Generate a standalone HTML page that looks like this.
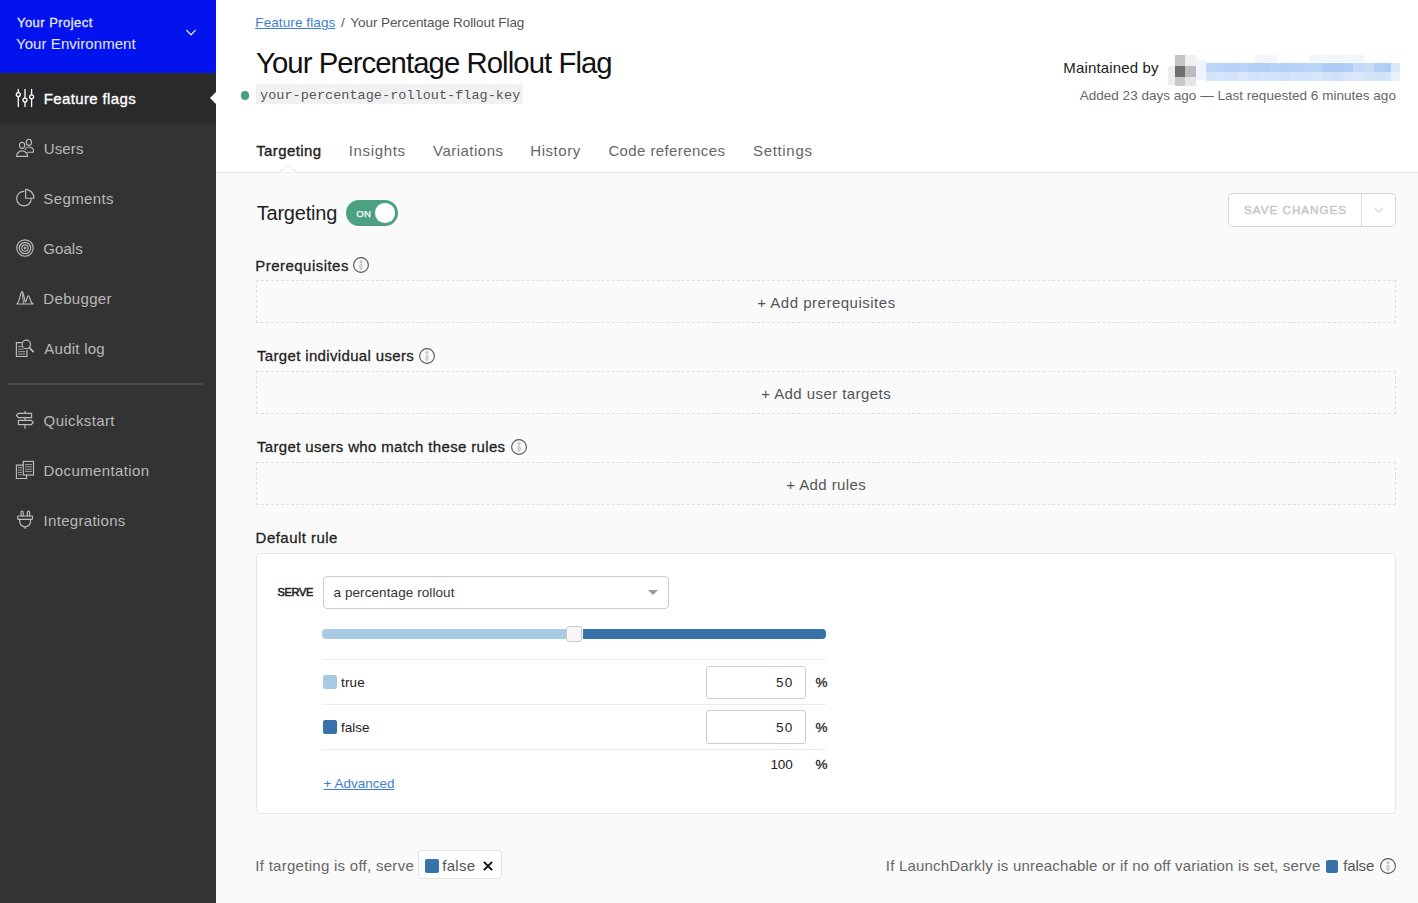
<!DOCTYPE html>
<html><head><meta charset="utf-8">
<style>

*{box-sizing:border-box;margin:0;padding:0}
html,body{width:1418px;height:903px;overflow:hidden;background:#fafafa;font-family:"Liberation Sans",sans-serif;color:#222;position:relative}
.b{position:absolute}
.dash{position:absolute;left:256px;width:1140px;height:43px;border:1px dashed #e0e0e0}
.info{position:absolute;width:16px;height:16px}

.t{position:absolute;white-space:nowrap;line-height:1}
</style></head>
<body>

<div class="b" style="left:0;top:0;width:216px;height:903px;background:#333"></div>
<div class="b" style="left:0;top:0;width:216px;height:73px;background:#0313ee"></div>
<div class="b" style="left:0;top:73px;width:216px;height:49.5px;background:#2a2a2a"></div>
<div class="b" style="left:0;top:122px;width:216px;height:2px;background:#2f2f2f"></div>
<div class="b" style="left:8px;top:383px;width:196px;height:2px;background:#474747"></div>

<svg class="b" style="left:0;top:0" width="216" height="540" viewBox="0 0 216 540" fill="none" stroke-linecap="round">
 <g stroke="#fff" stroke-width="1.3">
  <path d="M18.3 89.5V92.6M18.3 96.6V106.5M25 89.5V98.1M25 102.1V106.5M31.6 89.5V94.8M31.6 98.8V106.5"/>
  <circle cx="18.3" cy="94.6" r="2"/><circle cx="25" cy="100.1" r="2"/><circle cx="31.6" cy="96.8" r="2"/>
 </g>
 <g stroke="#bdbdbd" stroke-width="1.15">
  <ellipse cx="22.1" cy="145.3" rx="2.6" ry="3.1"/>
  <ellipse cx="28.9" cy="142.3" rx="2.6" ry="3.1"/>
  <path d="M16.6 156.3 A5.5 5.4 0 0 1 27.6 156.3 Z"/>
  <path d="M25.2 149.6 A4.3 3.8 0 0 1 33.3 152.2 H27.4"/>
  <path d="M24 191.3 A7.3 7.3 0 1 0 31.3 198.6"/>
  <path d="M25.6 189.4 V198.2 H33.9 A8.4 8.8 0 0 0 25.6 189.4 Z"/>
  <circle cx="25" cy="248" r="8.2"/><circle cx="25" cy="248" r="5.7"/><circle cx="25" cy="248" r="3.2"/><circle cx="25" cy="248" r="0.8"/>
  <path d="M16.4 304 C19.8 304 20.2 291.4 22 291.4 C23.8 291.4 24.4 302.2 25.4 302.2 C26.4 302.2 27 295.7 28.4 295.7 C29.8 295.7 30.2 304 33.6 304 Z"/><path d="M22.2 293 C22.6 296 22.8 300 23.6 303.6" stroke-width="0.9"/>
  <path d="M21.2 342.6 H16.4 V356.5 H27 V350.3"/>
  <path d="M18.4 346.6 H21.5 M18.4 349.2 H23 M18.4 351.7 H25 M18.4 354.1 H25" stroke-width="0.8"/>
  <circle cx="26.3" cy="344.4" r="4.2"/>
  <path d="M29.3 347.6 L33.2 351.6" stroke-width="1.8"/>
  <path d="M25 411.2 V413.2 M25 417.7 V420.2 M25 424.7 V428.3"/>
  <path d="M31.6 413.3 H18.4 L16.4 415.45 L18.4 417.6 H31.6 Z"/>
  <path d="M18.4 420.3 H31.3 L33.3 422.45 L31.3 424.6 H18.4 Z"/>
  <path d="M23.3 465.1 H16.4 V478.5 H26.6 V475.1"/>
  <rect x="23.3" y="461.4" width="10.2" height="13.6"/>
  <path d="M25.3 464.6 H31.5 M25.3 466.8 H31.5 M25.3 469.2 H31.5 M25.3 471.4 H31.5 M18.3 467.6 H21.5 M18.3 470 H21.5 M18.3 472.4 H21.5 M18.3 474.8 H21.5" stroke-width="0.8"/>
  <path d="M21 516 V512.3 A1 1 0 0 1 23.2 512.3 V516 M27.4 516 V512.3 A1 1 0 0 1 29.6 512.3 V516"/>
  <rect x="17.7" y="516" width="14.8" height="3.3" rx="0.5"/>
  <path d="M19.7 519.3 V521.5 A5.4 5.3 0 0 0 30.5 521.5 V519.3 M25.1 526.8 V528.5"/>
 </g>
 <path d="M186.7 30.4 L191 34.8 L195.3 30.4" stroke="#fff" stroke-width="1.2" stroke-linecap="round" stroke-linejoin="round"/>
</svg>

<div class="b" style="left:216px;top:0;width:1202px;height:173px;background:#fff;border-bottom:1px solid #e3e3e3"></div>
<div class="b" style="left:209.8px;top:91.6px;width:0;height:0;border-top:6.2px solid transparent;border-bottom:6.2px solid transparent;border-right:6.2px solid #fff"></div>
<svg class="b" style="left:270px;top:160px" width="36" height="16" viewBox="270 160 36 16"><path d="M279.5 172.5 L288 164.5 L296.5 172.5 Z" fill="#fff"/><path d="M279.5 172.5 L288 164.5 L296.5 172.5" fill="none" stroke="#e3e3e3" stroke-width="1"/></svg>
<div class="b" style="left:240.5px;top:91.2px;width:8.6px;height:8.6px;border-radius:50%;background:#4d9e80"></div>
<div class="b" style="left:256px;top:84px;width:267px;height:20px;background:#f1f1f1"></div>
<div class="b" style="left:1166px;top:50px;width:240px;height:40px;filter:blur(0.6px)">
  <div class="b" style="left:2px;top:16px;width:7px;height:19px;background:#ededed"></div>
  <div class="b" style="left:8.7px;top:5.3px;width:10.3px;height:10.7px;background:#c4c4c4"></div>
  <div class="b" style="left:8.7px;top:16px;width:10.3px;height:10.7px;background:#6e6e6e"></div>
  <div class="b" style="left:8.7px;top:26.7px;width:10.3px;height:8.9px;background:#c8c8c8"></div>
  <div class="b" style="left:19px;top:5.3px;width:11px;height:10.7px;background:#f0f0f0"></div>
  <div class="b" style="left:19px;top:16px;width:11px;height:10.7px;background:#bdbdbd"></div>
  <div class="b" style="left:19px;top:26.7px;width:11px;height:8.9px;background:#e6e6e6"></div>
  <div class="b" style="left:30px;top:10px;width:10px;height:20px;background:#eef4fc"></div>
  <div class="b" style="left:89px;top:5px;width:22px;height:8px;background:#f3f7fd"></div>
  <div class="b" style="left:143px;top:5px;width:55px;height:7px;background:#f1f5fc"></div>
  <div class="b" style="left:39.8px;top:13.3px;width:185.2px;height:8.5px;background:linear-gradient(90deg,#bcd6f8 0.0px 10.5px,#b9d4f7 10.5px 21.0px,#b6d2f7 21.0px 31.5px,#b9d4f7 31.5px 42.0px,#b4d0f6 42.0px 52.5px,#b2cff6 52.5px 63.0px,#b7d3f7 63.0px 73.5px,#b3d0f6 73.5px 84.0px,#b6d2f7 84.0px 94.5px,#b8d4f7 94.5px 105.0px,#b9d4f7 105.0px 115.5px,#aecdf6 115.5px 126.0px,#adccf5 126.0px 136.5px,#b1cff6 136.5px 147.0px,#c3dbf8 147.0px 157.5px,#c8def8 157.5px 168.0px,#b2cff6 168.0px 178.5px,#aecdf6 178.5px 189.0px)"></div>
  <div class="b" style="left:39.8px;top:21.8px;width:185.2px;height:9.3px;background:linear-gradient(90deg,#d3e3f9 0.0px 10.5px,#d6e5f9 10.5px 21.0px,#d3e3f9 21.0px 31.5px,#dae7fa 31.5px 42.0px,#d1e2f9 42.0px 52.5px,#d6e5f9 52.5px 63.0px,#d3e3f9 63.0px 73.5px,#cfe0f8 73.5px 84.0px,#d6e5f9 84.0px 94.5px,#d3e3f9 94.5px 105.0px,#d8e6fa 105.0px 115.5px,#d3e3f9 115.5px 126.0px,#cfe0f8 126.0px 136.5px,#d6e5f9 136.5px 147.0px,#dbe8fa 147.0px 157.5px,#d3e3f9 157.5px 168.0px,#d1e2f9 168.0px 178.5px,#d5e4f9 178.5px 189.0px)"></div>
  <div class="b" style="left:225px;top:13.3px;width:9px;height:8.5px;background:#dce9fb"></div>
  <div class="b" style="left:225px;top:21.8px;width:9px;height:9.3px;background:#e8f0fc"></div>
</div>
<div class="b" style="left:346.2px;top:200px;width:51.6px;height:25.8px;border-radius:13px;background:#4ca181"></div>
<div class="b" style="left:375.3px;top:203.2px;width:19.4px;height:19.4px;border-radius:50%;background:#fff"></div>
<div class="b" style="left:1228px;top:193px;width:168px;height:34px;border:1px solid #d6d6d6;border-radius:4px;background:#fff"></div>
<div class="b" style="left:1361px;top:194px;width:1px;height:32px;background:#d9d9d9"></div>
<svg class="b" style="left:1372px;top:205px" width="14" height="10" viewBox="0 0 14 10"><path d="M2.3 3 L6.5 7 L10.7 3" fill="none" stroke="#bdbdbd" stroke-width="1"/></svg>
<svg class="info" style="left:353.1px;top:256.9px" width="16" height="16" viewBox="0 0 16 16"><circle cx="8" cy="8" r="7.4" fill="none" stroke="#555" stroke-width="1.1"/><ellipse cx="8" cy="4.6" rx="1.2" ry="0.9" fill="none" stroke="#aaa" stroke-width="0.9"/><rect x="7" y="7.2" width="2" height="5.2" rx="1" fill="none" stroke="#aaa" stroke-width="0.9"/></svg>
<svg class="info" style="left:418.8px;top:347.7px" width="16" height="16" viewBox="0 0 16 16"><circle cx="8" cy="8" r="7.4" fill="none" stroke="#555" stroke-width="1.1"/><ellipse cx="8" cy="4.6" rx="1.2" ry="0.9" fill="none" stroke="#aaa" stroke-width="0.9"/><rect x="7" y="7.2" width="2" height="5.2" rx="1" fill="none" stroke="#aaa" stroke-width="0.9"/></svg>
<svg class="info" style="left:511px;top:438.8px" width="16" height="16" viewBox="0 0 16 16"><circle cx="8" cy="8" r="7.4" fill="none" stroke="#555" stroke-width="1.1"/><ellipse cx="8" cy="4.6" rx="1.2" ry="0.9" fill="none" stroke="#aaa" stroke-width="0.9"/><rect x="7" y="7.2" width="2" height="5.2" rx="1" fill="none" stroke="#aaa" stroke-width="0.9"/></svg>
<svg class="info" style="left:1380.2px;top:857.8px" width="16" height="16" viewBox="0 0 16 16"><circle cx="8" cy="8" r="7.4" fill="none" stroke="#555" stroke-width="1.1"/><ellipse cx="8" cy="4.6" rx="1.2" ry="0.9" fill="none" stroke="#aaa" stroke-width="0.9"/><rect x="7" y="7.2" width="2" height="5.2" rx="1" fill="none" stroke="#aaa" stroke-width="0.9"/></svg>
<div class="dash" style="top:280px"></div>
<div class="dash" style="top:371px"></div>
<div class="dash" style="top:462px"></div>
<div class="b" style="left:256px;top:553px;width:1140px;height:261px;background:#fff;border:1px solid #e6e6e6;border-radius:4px"></div>
<div class="b" style="left:322.5px;top:575.5px;width:346.5px;height:33px;background:#fff;border:1px solid #cdcdcd;border-radius:4px"></div>
<svg class="b" style="left:644px;top:586px" width="18" height="12" viewBox="0 0 18 12"><path d="M4 4 H14 L9 9 Z" fill="#9a9a9a"/></svg>
<div class="b" style="left:322px;top:629px;width:245px;height:10px;border-radius:4px 0 0 4px;background:#a8cae2"></div>
<div class="b" style="left:583px;top:629px;width:243px;height:10px;border-radius:0 4px 4px 0;background:#3773aa"></div>
<div class="b" style="left:566.2px;top:626.1px;width:15.6px;height:15.6px;border-radius:3px;background:#f7f7f7;border:1px solid #c9c9c9"></div>
<div class="b" style="left:322px;top:659px;width:504px;height:1px;background:#ececec"></div>
<div class="b" style="left:322px;top:704px;width:504px;height:1px;background:#ececec"></div>
<div class="b" style="left:322px;top:749px;width:504px;height:1px;background:#ececec"></div>
<div class="b" style="left:323.2px;top:675.2px;width:13.8px;height:13.5px;border-radius:2px;background:#a8cae2"></div>
<div class="b" style="left:323.2px;top:720.2px;width:13.8px;height:13.6px;border-radius:2px;background:#3773aa"></div>
<div class="b" style="left:706.4px;top:665.5px;width:99.4px;height:33.1px;background:#fff;border:1px solid #cdcdcd;border-radius:3px"></div>
<div class="b" style="left:706.4px;top:710.2px;width:99.4px;height:33.4px;background:#fff;border:1px solid #cdcdcd;border-radius:3px"></div>
<div class="b" style="left:418.4px;top:850.4px;width:83.3px;height:29px;background:#fff;border:1px solid #e3e3e3;border-radius:3px"></div>
<div class="b" style="left:424.9px;top:859.2px;width:14px;height:13.7px;border-radius:2px;background:#3773aa"></div>
<svg class="b" style="left:480px;top:858px" width="16" height="16" viewBox="0 0 16 16"><path d="M3.9 3.9 L12.1 12.1 M12.1 3.9 L3.9 12.1" stroke="#111" stroke-width="2"/></svg>
<div class="b" style="left:1325.6px;top:860px;width:12.6px;height:12.5px;border-radius:2px;background:#3773aa"></div>

<div class="t" style="left:17.00px;top:16.00px;font-size:13px;font-weight:normal;color:#e6eaff;letter-spacing:0.455px;font-family:'Liberation Sans', sans-serif;-webkit-text-stroke:0.3px currentColor;">Your Project</div>
<div class="t" style="left:16.00px;top:36.00px;font-size:15px;font-weight:normal;color:#e6eaff;letter-spacing:0.067px;font-family:'Liberation Sans', sans-serif;">Your Environment</div>
<div class="t" style="left:43.70px;top:91.00px;font-size:15px;font-weight:normal;color:#fff;letter-spacing:0.375px;font-family:'Liberation Sans', sans-serif;-webkit-text-stroke:0.35px currentColor;">Feature flags</div>
<div class="t" style="left:43.70px;top:141.00px;font-size:15px;font-weight:normal;color:#b9b9b9;letter-spacing:0.150px;font-family:'Liberation Sans', sans-serif;">Users</div>
<div class="t" style="left:43.30px;top:191.00px;font-size:15px;font-weight:normal;color:#b9b9b9;letter-spacing:0.386px;font-family:'Liberation Sans', sans-serif;">Segments</div>
<div class="t" style="left:43.30px;top:240.70px;font-size:15px;font-weight:normal;color:#b9b9b9;letter-spacing:0.075px;font-family:'Liberation Sans', sans-serif;">Goals</div>
<div class="t" style="left:43.30px;top:290.60px;font-size:15px;font-weight:normal;color:#b9b9b9;letter-spacing:0.329px;font-family:'Liberation Sans', sans-serif;">Debugger</div>
<div class="t" style="left:44.30px;top:340.70px;font-size:15px;font-weight:normal;color:#b9b9b9;letter-spacing:0.250px;font-family:'Liberation Sans', sans-serif;">Audit log</div>
<div class="t" style="left:43.60px;top:412.90px;font-size:15px;font-weight:normal;color:#b9b9b9;letter-spacing:0.367px;font-family:'Liberation Sans', sans-serif;">Quickstart</div>
<div class="t" style="left:43.60px;top:462.80px;font-size:15px;font-weight:normal;color:#b9b9b9;letter-spacing:0.383px;font-family:'Liberation Sans', sans-serif;">Documentation</div>
<div class="t" style="left:43.60px;top:512.90px;font-size:15px;font-weight:normal;color:#b9b9b9;letter-spacing:0.300px;font-family:'Liberation Sans', sans-serif;">Integrations</div>
<div class="t" style="left:255.30px;top:16.40px;font-size:13.5px;font-weight:normal;color:#3f7dd3;letter-spacing:0.100px;font-family:'Liberation Sans', sans-serif;text-decoration:underline;">Feature flags</div>
<div class="t" style="left:341.00px;top:16.40px;font-size:13.5px;font-weight:normal;color:#555;letter-spacing:0.000px;font-family:'Liberation Sans', sans-serif;">/</div>
<div class="t" style="left:350.30px;top:16.40px;font-size:13.5px;font-weight:normal;color:#555;letter-spacing:-0.067px;font-family:'Liberation Sans', sans-serif;">Your Percentage Rollout Flag</div>
<div class="t" style="left:256.00px;top:47.80px;font-size:29.3px;font-weight:normal;color:#111;letter-spacing:-0.926px;font-family:'Liberation Sans', sans-serif;">Your Percentage Rollout Flag</div>
<div class="t" style="left:260.00px;top:88.50px;font-size:13.5px;font-weight:normal;color:#555;letter-spacing:0.032px;font-family:'Liberation Mono', monospace;">your-percentage-rollout-flag-key</div>
<div class="t" style="left:1063.30px;top:60.10px;font-size:15px;font-weight:normal;color:#222;letter-spacing:0.158px;font-family:'Liberation Sans', sans-serif;">Maintained by</div>
<div class="t" style="left:1079.70px;top:89.20px;font-size:13.5px;font-weight:normal;color:#666;letter-spacing:0.021px;font-family:'Liberation Sans', sans-serif;">Added 23 days ago &mdash; Last requested 6 minutes ago</div>
<div class="t" style="left:256.20px;top:142.80px;font-size:15px;font-weight:normal;color:#222;letter-spacing:0.400px;font-family:'Liberation Sans', sans-serif;-webkit-text-stroke:0.35px currentColor;">Targeting</div>
<div class="t" style="left:348.70px;top:142.80px;font-size:15px;font-weight:normal;color:#666;letter-spacing:0.657px;font-family:'Liberation Sans', sans-serif;">Insights</div>
<div class="t" style="left:433.00px;top:142.80px;font-size:15px;font-weight:normal;color:#666;letter-spacing:0.489px;font-family:'Liberation Sans', sans-serif;">Variations</div>
<div class="t" style="left:530.30px;top:142.80px;font-size:15px;font-weight:normal;color:#666;letter-spacing:0.533px;font-family:'Liberation Sans', sans-serif;">History</div>
<div class="t" style="left:608.40px;top:142.80px;font-size:15px;font-weight:normal;color:#666;letter-spacing:0.400px;font-family:'Liberation Sans', sans-serif;">Code references</div>
<div class="t" style="left:753.00px;top:142.80px;font-size:15px;font-weight:normal;color:#666;letter-spacing:0.671px;font-family:'Liberation Sans', sans-serif;">Settings</div>
<div class="t" style="left:256.70px;top:202.80px;font-size:20px;font-weight:normal;color:#222;letter-spacing:-0.212px;font-family:'Liberation Sans', sans-serif;">Targeting</div>
<div class="t" style="left:356.30px;top:208.70px;font-size:9.6px;font-weight:normal;color:#fff;letter-spacing:0.300px;font-family:'Liberation Sans', sans-serif;-webkit-text-stroke:0.25px currentColor;">ON</div>
<div class="t" style="left:1244.00px;top:204.30px;font-size:11.6px;font-weight:normal;color:#c6c6c6;letter-spacing:1.036px;font-family:'Liberation Sans', sans-serif;-webkit-text-stroke:0.45px currentColor;">SAVE CHANGES</div>
<div class="t" style="left:255.20px;top:257.50px;font-size:15px;font-weight:normal;color:#222;letter-spacing:0.475px;font-family:'Liberation Sans', sans-serif;-webkit-text-stroke:0.28px currentColor;">Prerequisites</div>
<div class="t" style="left:257.00px;top:348.20px;font-size:15px;font-weight:normal;color:#222;letter-spacing:0.341px;font-family:'Liberation Sans', sans-serif;-webkit-text-stroke:0.28px currentColor;">Target individual users</div>
<div class="t" style="left:257.00px;top:438.70px;font-size:15px;font-weight:normal;color:#222;letter-spacing:0.342px;font-family:'Liberation Sans', sans-serif;-webkit-text-stroke:0.28px currentColor;">Target users who match these rules</div>
<div class="t" style="left:255.60px;top:529.80px;font-size:15px;font-weight:normal;color:#222;letter-spacing:0.464px;font-family:'Liberation Sans', sans-serif;-webkit-text-stroke:0.28px currentColor;">Default rule</div>
<div class="t" style="left:757.20px;top:294.80px;font-size:15px;font-weight:normal;color:#555;letter-spacing:0.506px;font-family:'Liberation Sans', sans-serif;">+ Add prerequisites</div>
<div class="t" style="left:761.20px;top:385.80px;font-size:15px;font-weight:normal;color:#555;letter-spacing:0.429px;font-family:'Liberation Sans', sans-serif;">+ Add user targets</div>
<div class="t" style="left:786.20px;top:476.65px;font-size:15px;font-weight:normal;color:#555;letter-spacing:0.420px;font-family:'Liberation Sans', sans-serif;">+ Add rules</div>
<div class="t" style="left:277.50px;top:587.20px;font-size:11px;font-weight:normal;color:#222;letter-spacing:-0.325px;font-family:'Liberation Sans', sans-serif;-webkit-text-stroke:0.55px currentColor;">SERVE</div>
<div class="t" style="left:333.50px;top:585.70px;font-size:13.5px;font-weight:normal;color:#333;letter-spacing:0.084px;font-family:'Liberation Sans', sans-serif;">a percentage rollout</div>
<div class="t" style="left:341.10px;top:675.90px;font-size:13.5px;font-weight:normal;color:#222;letter-spacing:0.100px;font-family:'Liberation Sans', sans-serif;">true</div>
<div class="t" style="left:341.10px;top:720.80px;font-size:13.5px;font-weight:normal;color:#222;letter-spacing:-0.025px;font-family:'Liberation Sans', sans-serif;">false</div>
<div class="t" style="left:776.00px;top:675.90px;font-size:13.5px;font-weight:normal;color:#222;letter-spacing:1.200px;font-family:'Liberation Sans', sans-serif;">50</div>
<div class="t" style="left:815.40px;top:675.90px;font-size:13.5px;font-weight:normal;color:#222;letter-spacing:0.000px;font-family:'Liberation Sans', sans-serif;-webkit-text-stroke:0.3px currentColor;">%</div>
<div class="t" style="left:776.00px;top:720.90px;font-size:13.5px;font-weight:normal;color:#222;letter-spacing:1.200px;font-family:'Liberation Sans', sans-serif;">50</div>
<div class="t" style="left:815.40px;top:720.90px;font-size:13.5px;font-weight:normal;color:#222;letter-spacing:0.000px;font-family:'Liberation Sans', sans-serif;-webkit-text-stroke:0.3px currentColor;">%</div>
<div class="t" style="left:770.40px;top:758.10px;font-size:13.5px;font-weight:normal;color:#222;letter-spacing:-0.100px;font-family:'Liberation Sans', sans-serif;">100</div>
<div class="t" style="left:815.40px;top:758.10px;font-size:13.5px;font-weight:normal;color:#222;letter-spacing:0.000px;font-family:'Liberation Sans', sans-serif;-webkit-text-stroke:0.3px currentColor;">%</div>
<div class="t" style="left:323.50px;top:776.80px;font-size:13.5px;font-weight:normal;color:#3f7dd3;letter-spacing:0.000px;font-family:'Liberation Sans', sans-serif;text-decoration:underline;">+ Advanced</div>
<div class="t" style="left:255.30px;top:858.20px;font-size:15px;font-weight:normal;color:#666;letter-spacing:0.280px;font-family:'Liberation Sans', sans-serif;">If targeting is off, serve</div>
<div class="t" style="left:442.30px;top:858.20px;font-size:15px;font-weight:normal;color:#555;letter-spacing:0.275px;font-family:'Liberation Sans', sans-serif;">false</div>
<div class="t" style="left:885.80px;top:858.20px;font-size:15px;font-weight:normal;color:#666;letter-spacing:0.195px;font-family:'Liberation Sans', sans-serif;">If LaunchDarkly is unreachable or if no off variation is set, serve</div>
<div class="t" style="left:1343.30px;top:858.20px;font-size:15px;font-weight:normal;color:#555;letter-spacing:-0.175px;font-family:'Liberation Sans', sans-serif;">false</div>
</body></html>
